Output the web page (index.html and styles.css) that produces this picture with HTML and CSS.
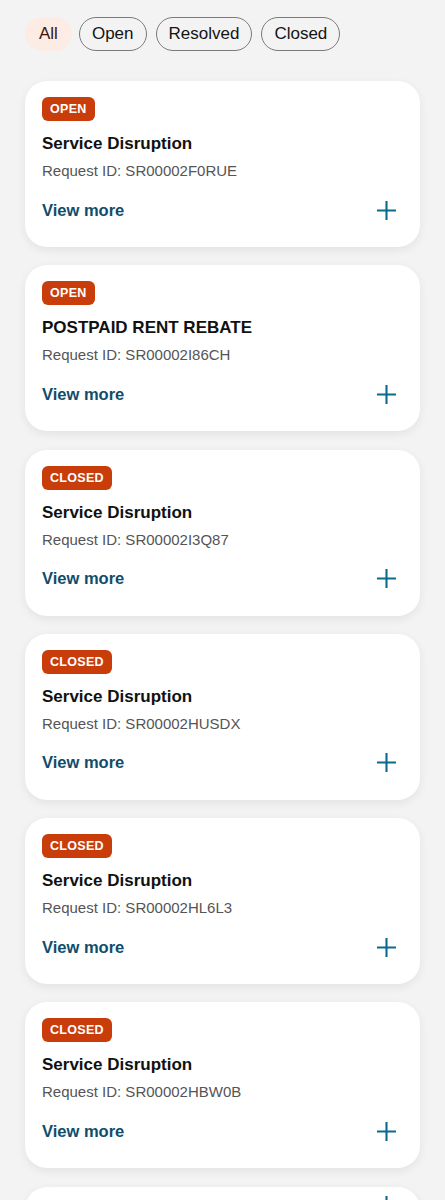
FILE: index.html
```html
<!DOCTYPE html>
<html>
<head>
<meta charset="utf-8">
<link rel="stylesheet" href="styles.css">
</head>
<body>
<div class="page">
  <div class="filters">
    <span class="chip chip-active">All</span>
    <span class="chip">Open</span>
    <span class="chip">Resolved</span>
    <span class="chip">Closed</span>
  </div>
  <div class="list">
    <div class="card">
      <span class="badge">OPEN</span>
      <div class="title">Service Disruption</div>
      <div class="rid">Request ID: SR00002F0RUE</div>
      <div class="foot"><span class="more">View more</span><svg class="plus" viewBox="0 0 20 20"><path d="M10 0V20M0 10H20"/></svg></div>
    </div>
    <div class="card">
      <span class="badge">OPEN</span>
      <div class="title">POSTPAID RENT REBATE</div>
      <div class="rid">Request ID: SR00002I86CH</div>
      <div class="foot"><span class="more">View more</span><svg class="plus" viewBox="0 0 20 20"><path d="M10 0V20M0 10H20"/></svg></div>
    </div>
    <div class="card">
      <span class="badge">CLOSED</span>
      <div class="title">Service Disruption</div>
      <div class="rid">Request ID: SR00002I3Q87</div>
      <div class="foot"><span class="more">View more</span><svg class="plus" viewBox="0 0 20 20"><path d="M10 0V20M0 10H20"/></svg></div>
    </div>
    <div class="card">
      <span class="badge">CLOSED</span>
      <div class="title">Service Disruption</div>
      <div class="rid">Request ID: SR00002HUSDX</div>
      <div class="foot"><span class="more">View more</span><svg class="plus" viewBox="0 0 20 20"><path d="M10 0V20M0 10H20"/></svg></div>
    </div>
    <div class="card">
      <span class="badge">CLOSED</span>
      <div class="title">Service Disruption</div>
      <div class="rid">Request ID: SR00002HL6L3</div>
      <div class="foot"><span class="more">View more</span><svg class="plus" viewBox="0 0 20 20"><path d="M10 0V20M0 10H20"/></svg></div>
    </div>
    <div class="card">
      <span class="badge">CLOSED</span>
      <div class="title">Service Disruption</div>
      <div class="rid">Request ID: SR00002HBW0B</div>
      <div class="foot"><span class="more">View more</span><svg class="plus" viewBox="0 0 20 20"><path d="M10 0V20M0 10H20"/></svg></div>
    </div>
    <div class="card card-peek">
      <svg class="plus" viewBox="0 0 20 20"><path d="M10 0V20M0 10H20"/></svg>
    </div>
  </div>
</div>
</body>
</html>
```

FILE: styles.css
```css
html, body {
  margin: 0;
  padding: 0;
  background: #f3f3f3;
  font-family: "Liberation Sans", Arial, sans-serif;
}
.page {
  padding: 17px 25px 0 25px;
}
.filters {
  display: flex;
  gap: 9px;
  align-items: center;
}
.chip {
  box-sizing: border-box;
  height: 34px;
  padding: 0 12px;
  border: 1px solid #7a7a7a;
  border-radius: 17px;
  display: inline-flex;
  align-items: center;
  font-size: 17px;
  color: #141414;
}
.chip-active {
  background: #fcece3;
  border-color: transparent;
  color: #3a1410;
  padding: 0 13px;
  margin-right: -2px;
}
.list {
  margin-top: 30px;
  display: flex;
  flex-direction: column;
  gap: 18.3px;
}
.card {
  background: #fff;
  border-radius: 22px;
  box-shadow: 0 3px 10px rgba(0,0,0,0.07);
  padding: 16px 17px 0 17px;
  height: 166px;
  flex-shrink: 0;
  box-sizing: border-box;
  display: flex;
  flex-direction: column;
  align-items: flex-start;
}
.card-peek {
  align-items: flex-end;
  padding-top: 9px;
}
.badge {
  background: #c93d0b;
  color: #fff;
  font-weight: bold;
  font-size: 12.5px;
  height: 24px;
  line-height: 24px;
  padding: 0 8px;
  border-radius: 6px;
  letter-spacing: 0.3px;
}
.title {
  margin-top: 12px;
  font-size: 17px;
  font-weight: bold;
  color: #111;
  line-height: 22px;
}
.rid {
  margin-top: 5px;
  font-size: 15px;
  color: #555;
  line-height: 22px;
}
.foot {
  margin-top: 17px;
  width: 100%;
  display: flex;
  justify-content: space-between;
  align-items: center;
  height: 22px;
}
.more {
  font-size: 16.5px;
  font-weight: bold;
  color: #114d6a;
}
.plus {
  width: 19px;
  height: 19px;
  margin-right: 7px;
  stroke: #0b6a8c;
  stroke-width: 2.2;
  fill: none;
}
```
